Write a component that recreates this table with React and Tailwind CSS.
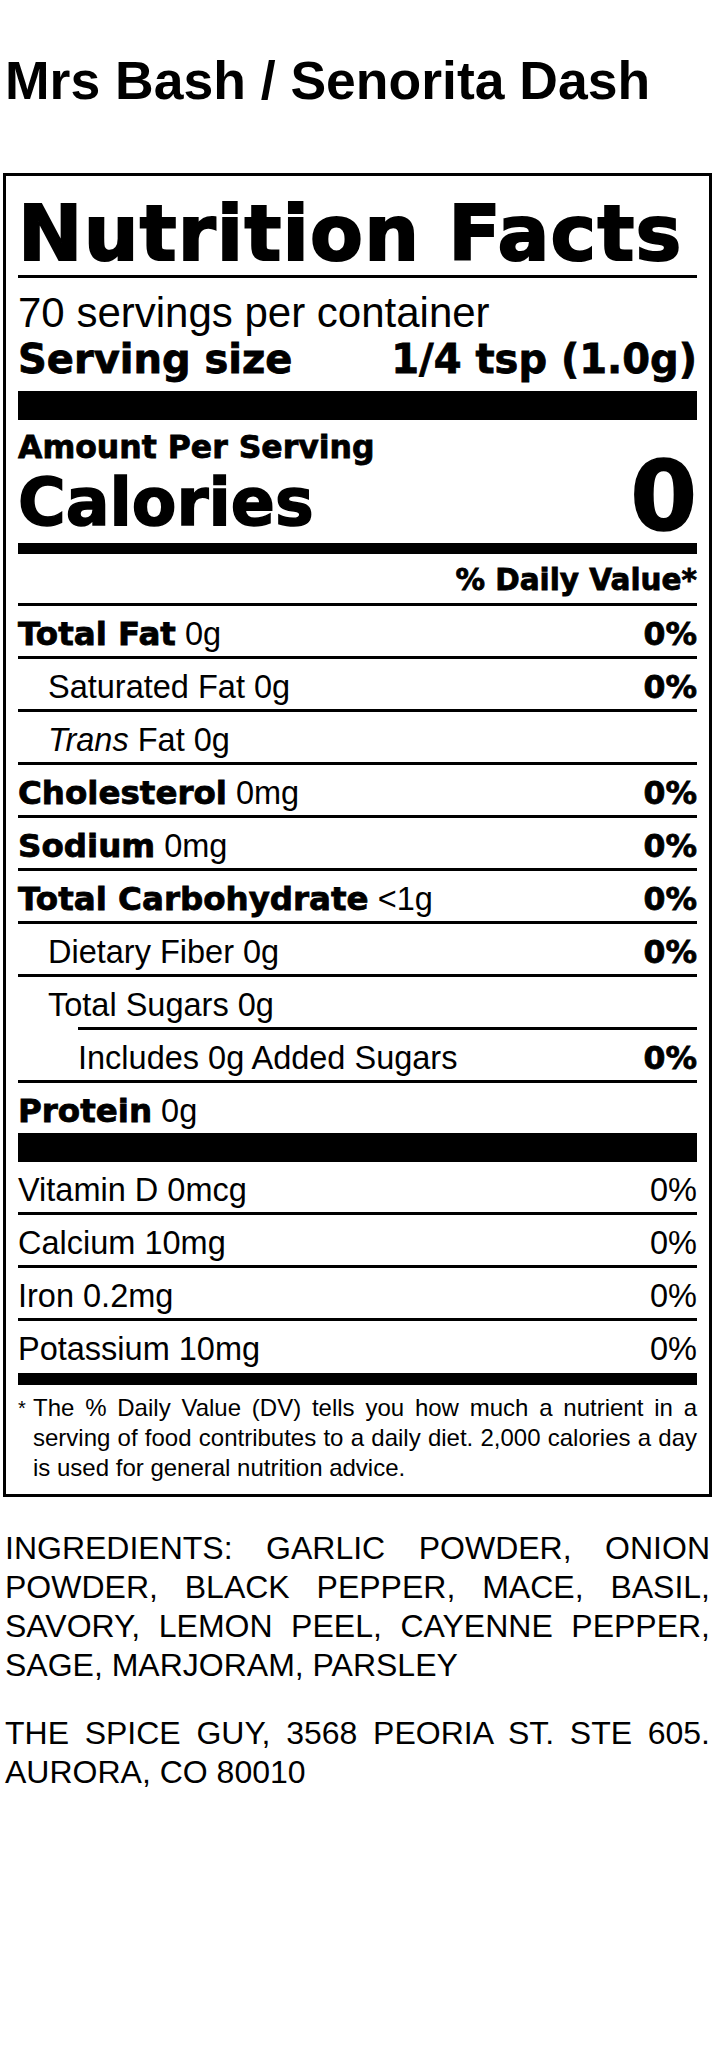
import React from "react";

const heavy = "font-['DejaVu_Sans',sans-serif] font-bold [-webkit-text-stroke:0.8px_black]";

const nutrients = [
    { label: "Total Fat", amount: "0g", dv: "0%" },
    { text: "Saturated Fat 0g", indent: 1, dv: "0%" },
    { trans: true, indent: 1 },
    { label: "Cholesterol", amount: "0mg", dv: "0%" },
    { label: "Sodium", amount: "0mg", dv: "0%" },
    { label: "Total Carbohydrate", amount: "<1g", dv: "0%" },
    { text: "Dietary Fiber 0g", indent: 1, dv: "0%" },
    { text: "Total Sugars 0g", indent: 1, shortLine: true },
    { text: "Includes 0g Added Sugars", indent: 2, dv: "0%" },
];

const vitamins = [
    { text: "Vitamin D 0mcg", dv: "0%" },
    { text: "Calcium 10mg", dv: "0%" },
    { text: "Iron 0.2mg", dv: "0%" },
    { text: "Potassium 10mg", dv: "0%" },
];

function Line({ short }) {
    return <div className={short ? "ml-[60px] h-[3px] bg-black" : "h-[3px] bg-black"} />;
}

function NutrientRow({ item }) {
    const pad = item.indent === 2 ? "pl-[60px]" : item.indent === 1 ? "pl-[30px]" : "";
    return (
        <div className={`flex h-[50px] justify-between whitespace-nowrap pt-[6px] leading-[44px] ${pad}`}>
            <div>
                {item.label && <span className={`${heavy} text-[32.5px]`}>{item.label}</span>}
                {item.amount && <span className="text-[32.5px]"> {item.amount}</span>}
                {item.text && <span className="text-[32.5px]">{item.text}</span>}
                {item.trans && (
                    <span className="text-[32.5px]">
                        <span className="italic">Trans</span> Fat 0g
                    </span>
                )}
            </div>
            {item.dv && <span className={`${heavy} text-[31.5px]`}>{item.dv}</span>}
        </div>
    );
}

export default function App() {
    return (
        <div className="min-h-[2045px] bg-white text-black font-['Liberation_Sans',Arial,sans-serif]">
            <h1 className="ml-[5px] pt-[54px] text-[53.5px] font-bold leading-[54px]">Mrs Bash / Senorita Dash</h1>

            <section className="mt-[65px] ml-[3px] w-[709px] border-[3px] border-black px-[12px] pt-[19px] pb-[11px]">
                <h2 className="whitespace-nowrap font-['DejaVu_Sans',sans-serif] text-[77px] font-bold leading-[77px] tracking-[1.2px] [-webkit-text-stroke:2px_black]">
                    Nutrition Facts
                </h2>
                <div className="mt-[3px] h-[3px] bg-black" />

                <p className="mt-[14px] text-[42px] leading-[42px]">70 servings per container</p>
                <div className={`${heavy} mt-[6px] flex justify-between text-[40px] leading-[39px]`}>
                    <span>Serving size</span>
                    <span>1/4 tsp (1.0g)</span>
                </div>
                <div className="mt-[12px] h-[29px] bg-black" />

                <p className={`${heavy} mt-[12px] text-[31.5px] leading-[31px]`}>Amount Per Serving</p>
                <div className="flex items-start justify-between font-['DejaVu_Sans',sans-serif] font-bold [-webkit-text-stroke:1.5px_black]">
                    <span className="mt-[8px] text-[65px] leading-[64px]">Calories</span>
                    <span className="-mt-[6px] text-[96px] leading-[80px]">0</span>
                </div>
                <div className="mt-[6px] h-[11px] bg-black" />

                <p className={`${heavy} mt-[12px] text-right text-[29.5px] leading-[28px]`}>% Daily Value*</p>
                <div className="mt-[9px] h-[3px] bg-black" />

                {nutrients.map((item, index) => (
                    <div key={index}>
                        <NutrientRow item={item} />
                        <Line short={item.shortLine} />
                    </div>
                ))}
                <NutrientRow item={{ label: "Protein", amount: "0g" }} />
                <div className="h-[29px] bg-black" />

                {vitamins.map((item, index) => (
                    <div key={index}>
                        <div className="flex h-[50px] justify-between whitespace-nowrap pt-[6px] text-[32.5px] leading-[44px]">
                            <span>{item.text}</span>
                            <span>{item.dv}</span>
                        </div>
                        {index < vitamins.length - 1 && <Line />}
                    </div>
                ))}
                <div className="mt-[2px] h-[12px] bg-black" />

                <div className="mt-[8px] flex text-[24px] leading-[30px]">
                    <span className="w-[15px] shrink-0 text-[20px]">*</span>
                    <p className="flex-1 text-justify">
                        The % Daily Value (DV) tells you how much a nutrient in a serving of food contributes to a daily diet. 2,000 calories a day is used for general nutrition advice.
                    </p>
                </div>
            </section>

            <p className="mt-[32px] ml-[5px] w-[705px] text-justify text-[32px] leading-[39px]">
                INGREDIENTS: GARLIC POWDER, ONION POWDER, BLACK PEPPER, MACE, BASIL, SAVORY, LEMON PEEL, CAYENNE PEPPER, SAGE, MARJORAM, PARSLEY
            </p>
            <p className="mt-[29px] ml-[5px] w-[705px] text-justify text-[32px] leading-[39px]">
                THE SPICE GUY, 3568 PEORIA ST. STE 605. AURORA, CO 80010
            </p>
        </div>
    );
}
